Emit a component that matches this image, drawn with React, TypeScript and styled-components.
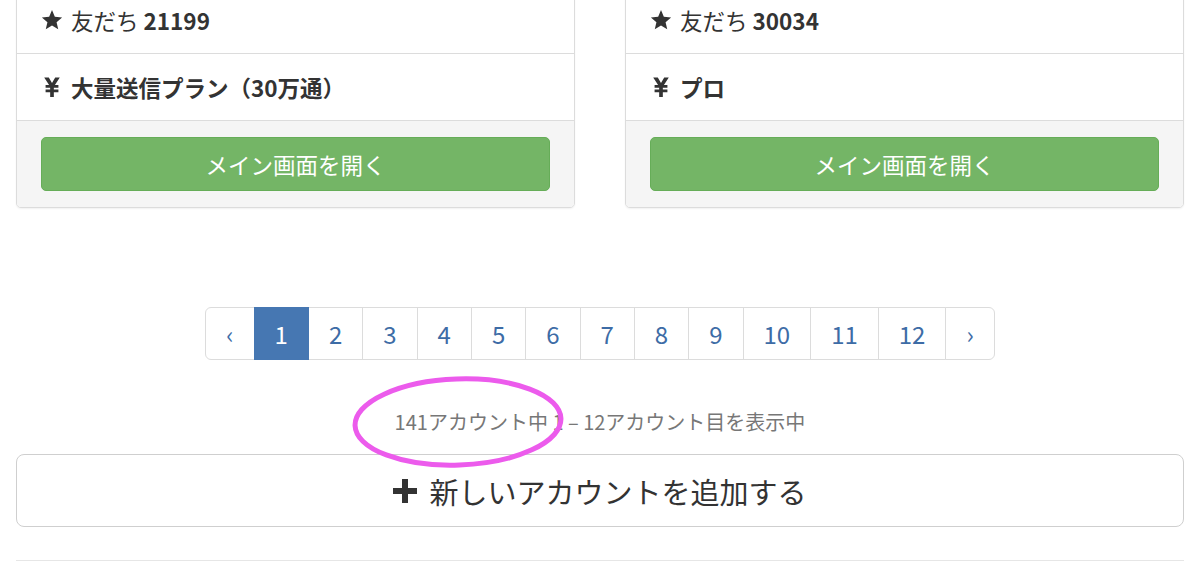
import React from "react";
import styled, { createGlobalStyle } from "styled-components";

const Global = createGlobalStyle`
  html, body { margin: 0; padding: 0; background: #fff; overflow: hidden; }
  body { font-family: "Noto Sans CJK JP", "Noto Sans", sans-serif; color: #333; }
  * { box-sizing: border-box; }
`;

const Page = styled.div`
  position: relative;
  padding: 0 16px;
`;

const CardGrid = styled.div`
  display: grid;
  grid-template-columns: 1fr 1fr;
  column-gap: 50px;
  margin-top: -14px;
`;

const Card = styled.div`
  border: 1px solid #dcdcdc;
  border-radius: 5px;
  background: #fff;
  box-shadow: 0 1px 2px rgba(0, 0, 0, 0.06);
  overflow: hidden;
`;

const Row = styled.div<{ $bold?: boolean }>`
  display: flex;
  align-items: center;
  gap: 8px;
  height: 67px;
  padding: 0 24px;
  border-bottom: 1px solid #dcdcdc;
  font-size: 22.5px;
  font-weight: ${(p) => (p.$bold ? 700 : 400)};
  color: #333;
  b { font-weight: 700; }
`;

const IconSvg = styled.svg`
  flex: none;
  display: block;
`;

const Footer = styled.div`
  background: #f5f5f5;
  padding: 16px 24px 16px;
`;

const GreenButton = styled.button`
  display: block;
  width: 100%;
  height: 54px;
  border: 1px solid #66ad58;
  border-radius: 5px;
  background: #74b566;
  color: #fff;
  font-family: inherit;
  font-size: 22.5px;
  cursor: pointer;
`;

const PagerWrap = styled.div`
  display: flex;
  justify-content: center;
  margin-top: 99px;
`;

const Pager = styled.ul`
  display: flex;
  list-style: none;
  margin: 0;
  padding: 0;
`;

const PageItem = styled.li<{ $active?: boolean; $arrow?: boolean }>`
  display: flex;
  align-items: center;
  justify-content: center;
  height: 53px;
  padding: 0 20px;
  min-width: ${(p) => (p.$arrow ? 47 : 55)}px;
  margin-left: -1px;
  border: 1px solid #dcdcdc;
  background: ${(p) => (p.$active ? "#4677b2" : "#fff")};
  border-color: ${(p) => (p.$active ? "#4677b2" : "#dcdcdc")};
  color: ${(p) => (p.$active ? "#fff" : "#3d6ca6")};
  font-size: 24px;
  position: relative;
  z-index: ${(p) => (p.$active ? 1 : 0)};
  &:first-child { border-radius: 6px 0 0 6px; margin-left: 0; }
  &:last-child { border-radius: 0 6px 6px 0; }
`;

const Info = styled.div`
  position: relative;
  margin-top: 49px;
  text-align: center;
  font-size: 20px;
  line-height: 26px;
  color: #777;
`;

const Ellipse = styled.svg`
  position: absolute;
  left: calc(50% - 250px);
  top: -35px;
  z-index: 5;
  pointer-events: none;
`;

const AddButton = styled.button`
  display: flex;
  align-items: center;
  justify-content: center;
  gap: 12px;
  width: 100%;
  height: 73px;
  margin-top: 19px;
  background: #fff;
  border: 1.5px solid #cfcfcf;
  border-radius: 8px;
  color: #333;
  font-family: inherit;
  font-size: 29px;
`;

const Divider = styled.hr`
  margin: 33px 0 0;
  border: 0;
  border-top: 1px solid #e6e6e6;
`;

const Star = () => (
  <IconSvg width="22" height="22" viewBox="0 0 24 24">
    <path
      d="M12 1.2l3.1 7.3 7.9.7-6 5.2 1.8 7.7L12 18l-6.8 4.1L7 14.4 1 9.2l7.9-.7z"
      fill="#333"
    />
  </IconSvg>
);

const Yen = () => (
  <IconSvg width="22" height="22" viewBox="0 0 24 24">
    <path
      d="M3.5 1.5h5l3.5 6.2 3.5-6.2h5l-5.3 8.3H19v3h-5v2h5v3h-5v5h-4v-5H5v-3h5v-2H5v-3h3.8z"
      fill="#333"
    />
  </IconSvg>
);

const accounts = [
  { friends: "21199", plan: "大量送信プラン（30万通）" },
  { friends: "30034", plan: "プロ" },
];

const pages = ["1", "2", "3", "4", "5", "6", "7", "8", "9", "10", "11", "12"];

export default function App() {
  return (
    <>
      <Global />
      <Page>
        <CardGrid>
          {accounts.map((a) => (
            <Card key={a.friends}>
              <Row>
                <Star />
                <span>
                  友だち <b>{a.friends}</b>
                </span>
              </Row>
              <Row $bold>
                <Yen />
                <span>{a.plan}</span>
              </Row>
              <Footer>
                <GreenButton>メイン画面を開く</GreenButton>
              </Footer>
            </Card>
          ))}
        </CardGrid>

        <PagerWrap>
          <Pager>
            <PageItem $arrow>‹</PageItem>
            {pages.map((p) => (
              <PageItem key={p} $active={p === "1"}>
                {p}
              </PageItem>
            ))}
            <PageItem $arrow>›</PageItem>
          </Pager>
        </PagerWrap>

        <Info>
          141アカウント中 1 – 12アカウント目を表示中
          <Ellipse width="216" height="96" viewBox="0 0 216 96">
            <ellipse cx="108" cy="48" rx="103" ry="43" fill="none" stroke="#ec5bec" strokeWidth="5" transform="rotate(-2 108 48)" />
          </Ellipse>
        </Info>

        <AddButton>
          <svg width="24" height="24" viewBox="0 0 24 24">
            <path d="M9 0h6v9h9v6h-9v9H9v-9H0V9h9z" fill="#333" />
          </svg>
          新しいアカウントを追加する
        </AddButton>

        <Divider />
      </Page>
    </>
  );
}
